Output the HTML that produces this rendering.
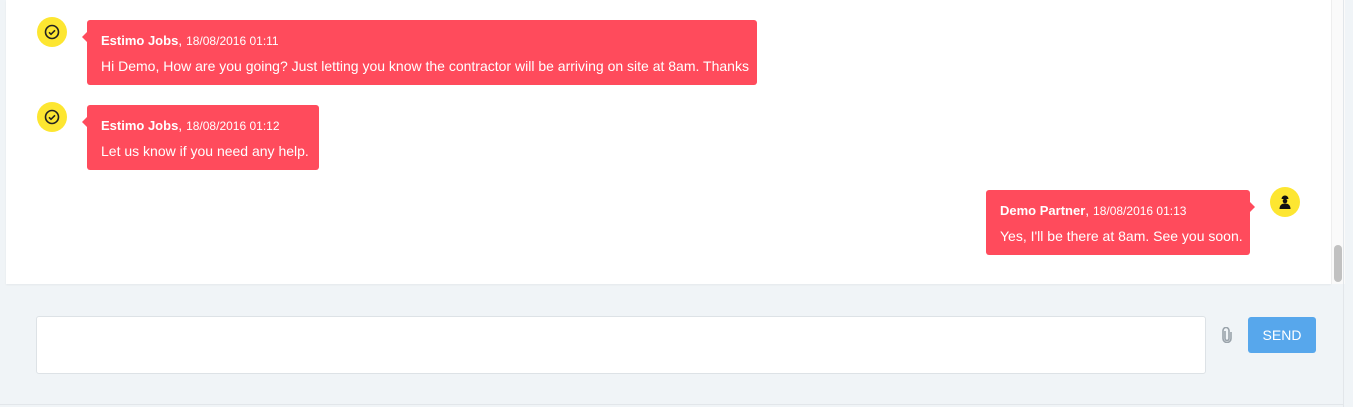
<!DOCTYPE html>
<html><head><style>
*{margin:0;padding:0;box-sizing:border-box}
body{width:1353px;height:407px;background:#f0f4f7;font-family:"Liberation Sans",sans-serif;position:relative;overflow:hidden}
.panel{position:absolute;left:6px;top:0;width:1325px;height:284px;background:#fff;box-shadow:0 1px 2px rgba(0,0,0,.05)}
.sb{position:absolute;left:1331px;top:0;width:14px;height:284px;background:#fafafa;border-left:1px solid #eee}
.thumb{position:absolute;left:1334px;top:245px;width:8px;height:37px;border-radius:4px;background:#c1c1c1}
.rline{position:absolute;left:1343px;top:0;width:1px;height:407px;background:#e2e6ea}
.bline{position:absolute;left:0;top:404px;width:1343px;height:1px;background:#e2e6ea}
.bub{position:absolute;background:#ff4b5c;color:#fff;border-radius:3px;padding:0 14px;font-size:14px}
.bub b{font-size:13px}
.bub .h{position:absolute;top:12px;left:14px;white-space:nowrap}
.bub .h span{font-size:12px}
.bub .t{position:absolute;top:38px;left:14px;white-space:nowrap}
.bub:before{content:"";position:absolute;top:12px;left:-5px;border:5px solid transparent;border-left:0;border-right-color:#ff4b5c}
.bub.r:before{left:auto;right:-5px;border-right:0;border-left:5px solid #ff4b5c}
.av{position:absolute;width:30px;height:30px;border-radius:50%;background:#fde631}
.av svg{position:absolute;left:7px;top:7px}
.ta{position:absolute;left:36px;top:316px;width:1170px;height:58px;background:#fff;border:1px solid #dde2e6;border-radius:3px}
.send{position:absolute;left:1248px;top:317px;width:68px;height:36px;background:#57a7ec;border-radius:3px;color:#fff;font-size:14px;text-align:center;line-height:36px}
</style></head><body>
<div class="panel"></div>
<div class="sb"></div><div class="thumb"></div>
<div class="rline"></div><div class="bline"></div>

<div class="av" style="left:37px;top:17px"><svg width="16" height="16" viewBox="0 0 16 16"><circle cx="8" cy="8" r="6.5" fill="none" stroke="#222" stroke-width="1.6"/><path d="M5 8.3l2 2 4-4" fill="none" stroke="#222" stroke-width="1.6"/></svg></div>
<div class="bub" style="left:87px;top:20px;width:670px;height:65px"><div class="h"><b>Estimo Jobs</b>, <span>18/08/2016 01:11</span></div><div class="t">Hi Demo, How are you going? Just letting you know the contractor will be arriving on site at 8am. Thanks</div></div>

<div class="av" style="left:37px;top:102px"><svg width="16" height="16" viewBox="0 0 16 16"><circle cx="8" cy="8" r="6.5" fill="none" stroke="#222" stroke-width="1.6"/><path d="M5 8.3l2 2 4-4" fill="none" stroke="#222" stroke-width="1.6"/></svg></div>
<div class="bub" style="left:87px;top:105px;width:232px;height:65px"><div class="h"><b>Estimo Jobs</b>, <span>18/08/2016 01:12</span></div><div class="t">Let us know if you need any help.</div></div>

<div class="bub r" style="left:986px;top:190px;width:264px;height:65px"><div class="h"><b>Demo Partner</b>, <span>18/08/2016 01:13</span></div><div class="t">Yes, I'll be there at 8am. See you soon.</div></div>
<div class="av" style="left:1270px;top:187px"><svg width="16" height="16" viewBox="0 0 16 16"><path d="M4.5 5a3.5 3.5 0 0 1 7 0z" fill="#111"/><circle cx="8" cy="7" r="2.3" fill="#111"/><path d="M2.5 15c0-4 2.5-5.5 5.5-5.5s5.5 1.5 5.5 5.5z" fill="#111"/></svg></div>

<div class="ta"></div>
<svg style="position:absolute;left:1221px;top:327px" width="12" height="16" viewBox="0 0 12 16"><path d="M4 4v7.5a2 2 0 0 0 4 0V3.5a3 3 0 0 0-6 0v8a4 4 0 0 0 8 0V5" fill="none" stroke="#9aa3ab" stroke-width="1.6"/></svg>
<div class="send">SEND</div>
</body></html>
